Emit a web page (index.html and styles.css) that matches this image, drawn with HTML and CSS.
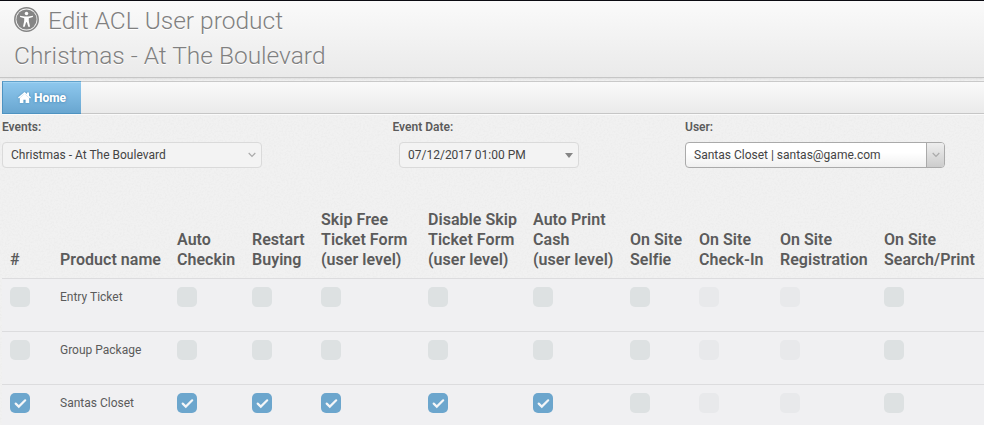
FILE: index.html
```html
<!DOCTYPE html>
<html lang="en">
<head>
<meta charset="utf-8">
<title>Edit ACL User product</title>
<link rel="stylesheet" href="styles.css">
</head>
<body>
<svg class="texture" aria-hidden="true"><filter id="grain"><feTurbulence type="fractalNoise" baseFrequency="0.55" numOctaves="2"/><feColorMatrix values="0 0 0 0 0.5  0 0 0 0 0.5  0 0 0 0 0.5  0.2 0 0 0 -0.08"/></filter><rect width="100%" height="100%" filter="url(#grain)"/></svg>
<svg width="0" height="0" class="defs"><symbol id="check" viewBox="0 0 20 20"><path d="M5.7 10.6 8.8 13.6 15.2 7.3" fill="none" stroke="#f4f6f8" stroke-width="2.2" stroke-linecap="round"/></symbol></svg>
<header class="page-header">
  <h1><svg class="access" viewBox="0 0 24 24"><circle cx="12" cy="12" r="11.2" fill="#f4f4f4" stroke="#858585" stroke-width="1.5"/><circle cx="12" cy="12" r="9.7" fill="#858585"/><circle cx="12" cy="6.2" r="1.7" fill="#fff"/><path d="M5.8 8.4 10.3 9.2H13.7L18.2 8.4V9.7L14.2 10.7V13.5L15.4 19H13.7L12.4 14.7H11.6L10.3 19H8.6L9.8 13.5V10.7L5.8 9.7Z" fill="#fff"/></svg>Edit ACL User product<br>Christmas - At The Boulevard</h1>
</header>
<nav class="bar"><a class="home"><svg viewBox="0 0 13 11"><path d="M6.5 0 0 5.4 .9 6.6 6.5 2 12.1 6.6 13 5.4 11 3.7V.6H9V2.1Z"/><path d="M6.5 1.8 1.8 5.7V11H5.4V7.8H7.6V11H11.2V5.7Z"/></svg>Home</a></nav>
<section class="filters">
  <div class="field events"><label>Events:</label><div class="select">Christmas - At The Boulevard<svg class="chev" viewBox="0 0 8 6"><path d="M.7 1 4 4.4 7.3 1"/></svg></div></div>
  <div class="field date"><label>Event Date:</label><div class="select">07/12/2017 01:00 PM<i class="caret"></i></div></div>
  <div class="field user"><label>User:</label><div class="select combo"><span>Santas Closet | santas@game.com</span><b class="drop"><svg class="chev" viewBox="0 0 8 6"><path d="M.7 1 4 4.4 7.3 1"/></svg></b></div></div>
</section>
<table class="acl">
<colgroup><col class="c1"><col class="c2"><col class="c3"><col class="c4"><col class="c5"><col class="c6"><col class="c7"><col class="c8"><col class="c9"><col class="c10"><col class="c11"></colgroup>
<thead><tr><th>#</th><th>Product name</th><th>Auto<br>Checkin</th><th>Restart<br>Buying</th><th>Skip Free<br>Ticket Form<br>(user level)</th><th>Disable Skip<br>Ticket Form<br>(user level)</th><th>Auto Print<br>Cash<br>(user level)</th><th>On Site<br>Selfie</th><th>On Site<br>Check-In</th><th>On Site<br>Registration</th><th>On Site<br>Search/Print</th></tr></thead>
<tbody>
<tr><td><i class="box"></i></td><td>Entry Ticket</td><td><i class="box"></i></td><td><i class="box"></i></td><td><i class="box"></i></td><td><i class="box"></i></td><td><i class="box"></i></td><td><i class="box"></i></td><td><i class="box off"></i></td><td><i class="box off"></i></td><td><i class="box"></i></td></tr>
<tr><td><i class="box"></i></td><td>Group Package</td><td><i class="box"></i></td><td><i class="box"></i></td><td><i class="box"></i></td><td><i class="box"></i></td><td><i class="box"></i></td><td><i class="box"></i></td><td><i class="box off"></i></td><td><i class="box off"></i></td><td><i class="box"></i></td></tr>
<tr><td><svg class="box on"><use href="#check"/></svg></td><td>Santas Closet</td><td><svg class="box on"><use href="#check"/></svg></td><td><svg class="box on"><use href="#check"/></svg></td><td><svg class="box on"><use href="#check"/></svg></td><td><svg class="box on"><use href="#check"/></svg></td><td><svg class="box on"><use href="#check"/></svg></td><td><i class="box"></i></td><td><i class="box off"></i></td><td><i class="box off"></i></td><td><i class="box"></i></td></tr>
</tbody>
</table>
</body>
</html>
```
FILE: styles.css
```css
* { box-sizing: border-box; }
html { background: #f1f1f1; overflow: hidden; }
body { margin: 0; height: 425px; overflow: hidden; font: 12px/20px Roboto, "Liberation Sans", sans-serif; color: #5b5b5b; }
.texture { position: absolute; inset: 0; width: 100%; height: 100%; z-index: -1; }
.defs { position: absolute; }
.page-header { height: 78px; padding: 2px 14px 0; border-top: 1px solid #0b0b12; border-bottom: 1px solid #c6c6c6; background: linear-gradient(#fafafa, #eaeaea); box-shadow: 0 1px 2px rgba(0,0,0,.08); }
h1 { margin: 0; font-size: 24.5px; line-height: 35px; font-weight: 300; color: #808080; text-shadow: 0 1px 0 #fff; }
.access { width: 25px; height: 25px; margin-right: 9px; vertical-align: -3px; }
.bar { display: flex; height: 33px; margin: 3px 0 0 2px; border-top: 1px solid #c9c9c9; border-bottom: 1px solid #c6c6c6; background: linear-gradient(#fafafa, #eaeaea); box-shadow: 0 1px 0 #fafafa; }
.home { display: flex; align-items: center; gap: 3px; width: 79px; height: 33px; margin-top: -1px; padding-left: 15px; border: 1px solid #4e93c1; border-right: 0; border-top-color: #60a1cb; background: linear-gradient(#8ec8ee, #69a6d0); color: #fff; font-weight: 800; text-shadow: 0 0 3px #3479a8; box-shadow: inset 0 1px 0 #a1d3f2; }
.home svg { width: 13px; height: 11px; fill: #fff; filter: drop-shadow(0 0 1px #4b8cb9); }
.filters { display: flex; height: 87px; padding: 3px 0 0 2px; }
.field label { display: block; height: 25px; font-weight: 600; }
.events { width: 390.5px; }
.date { width: 293px; }
.select { display: flex; align-items: center; justify-content: space-between; width: 260px; height: 26px; padding: 0 5px 0 8px; border: 1px solid #dadada; border-radius: 4px; background: #f3f3f3; color: #444; }
.date .select { width: 180px; margin-left: 6.5px; }
.chev { width: 8px; height: 6px; fill: none; stroke: #aaa; stroke-width: 1.2; }
.caret { width: 0; height: 0; border: 4px solid transparent; border-top: 5px solid #858585; border-bottom: 0; margin-top: 1px; }
.user { margin-left: -.5px; }
.select.combo { padding-right: 0; border-color: #aaa; background: linear-gradient(#fff 40%, #f0f0f0); }
.drop { display: flex; align-items: center; justify-content: center; width: 18px; height: 24px; border-left: 1px solid #aaa; border-radius: 0 3px 3px 0; background: linear-gradient(#eee, #ccc); }
.acl { width: 990px; margin-left: 2px; table-layout: fixed; border-collapse: separate; border-spacing: 0; }
.c1 { width: 50px; } .c2 { width: 117px; } .c3 { width: 75px; } .c4 { width: 69px; } .c5 { width: 107px; } .c6 { width: 105px; } .c7 { width: 97px; } .c8 { width: 69px; } .c9 { width: 81px; } .c10 { width: 104px; } .c11 { width: 116px; }
th { height: 77px; padding: 8px 0 8px 8px; text-align: left; vertical-align: bottom; font-size: 16px; line-height: 20px; font-weight: 600; letter-spacing: .04px; white-space: nowrap; }
td { height: 53px; padding: 8px 0 0 8px; vertical-align: top; border-top: 1px solid #dcdcde; background: #f0f0f2; }
.box { display: block; width: 20px; height: 20px; border-radius: 5px; background: #dde1e2; }
.box.off { background: #e8e9eb; }
.box.on { background: #6ca6cd; }
```
